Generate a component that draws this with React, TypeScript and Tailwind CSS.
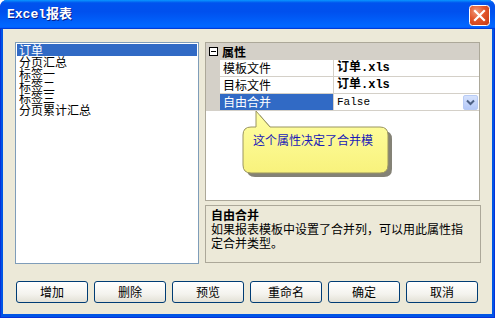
import React from "react";

const cjk = '"Noto Sans CJK SC", "Noto Sans", sans-serif';
const mono = '"Liberation Mono", "Noto Sans CJK SC", monospace';

function CloseButton() {
  return (
    <svg width="21" height="21" viewBox="0 0 21 21" className="block">
      <defs>
        <radialGradient id="cg" cx="0.35" cy="0.3" r="0.9">
          <stop offset="0" stopColor="#F19A7C" />
          <stop offset="0.45" stopColor="#E2562C" />
          <stop offset="1" stopColor="#C63A12" />
        </radialGradient>
      </defs>
      <rect x="0.5" y="0.5" width="20" height="20" rx="3" fill="url(#cg)" stroke="#FFFFFF" />
      <path d="M6 6 L15 15 M15 6 L6 15" stroke="#FFFFFF" strokeWidth="2.2" strokeLinecap="square" />
    </svg>
  );
}

function Balloon() {
  return (
    <div className="absolute left-[238px] top-[108px] w-[156px] h-[70px] pointer-events-none">
      <svg width="156" height="70" viewBox="0 0 156 70" className="absolute left-0 top-0">
        <defs>
          <linearGradient id="yg" x1="0" y1="0" x2="0" y2="1">
            <stop offset="0" stopColor="#FFFFA4" />
            <stop offset="1" stopColor="#F8F27C" />
          </linearGradient>
        </defs>
        <path
          d="M20 5 L20 21 L13 21 Q7 21 7 29 L7 59 Q7 67 15 67 L144 67 Q152 67 152 59 L152 29 Q152 21 144 21 L34 21 Z"
          fill="#6E6C5E"
          transform="translate(2,2)"
          opacity="0.85"
        />
        <path
          d="M18 3 L18 19 L13 19 Q5 19 5 27 L5 57 Q5 65 13 65 L142 65 Q150 65 150 57 L150 27 Q150 19 142 19 L32 19 Z"
          fill="url(#yg)"
          stroke="#9A9560"
          strokeWidth="1"
        />
      </svg>
      <div
        className="absolute left-[15px] top-[26px] text-[12px] leading-[12px] text-[#1A1AB8] whitespace-nowrap"
        style={{ fontFamily: cjk }}
      >
        这个属性决定了合并模
      </div>
    </div>
  );
}

function DropButton() {
  return (
    <div className="w-[15px] h-[15px] rounded-[2px] border border-[#B8CBF5] bg-[linear-gradient(180deg,#D6E2FD,#B5C9F8)] flex items-center justify-center">
      <svg width="9" height="7" viewBox="0 0 9 7">
        <path d="M1 1.5 L4.5 5 L8 1.5" stroke="#4D6185" strokeWidth="2" fill="none" />
      </svg>
    </div>
  );
}

const buttons = ["增加", "删除", "预览", "重命名", "确定", "取消"];
const items = ["订单", "分页汇总", "标签一", "标签二", "标签三", "分页累计汇总"];

export default function App() {
  return (
    <div className="relative w-[495px] h-[318px] overflow-hidden">
      <div className="w-[495px] h-[318px] flex flex-col rounded-t-[7px] bg-[#0055E5] border-x border-b border-[#0831D9]">
        <div className="h-[29px] shrink-0 -mx-px rounded-t-[7px] bg-[linear-gradient(180deg,#0997FF,#0053EE_10%,#0050EE_40%,#0066FF_88%,#0066FF_93%,#005BFF_95%,#003DD7_96%,#003DD7)] flex items-center pl-[7px] pr-[5px]">
          <div
            className="text-white font-bold text-[13px] leading-[14px] flex-1 pt-px [text-shadow:1px_1px_#0A1E8A]"
            style={{ fontFamily: mono }}
          >
            Excel报表
          </div>
          <div className="pt-px">
            <CloseButton />
          </div>
        </div>
        <div className="flex-1 mx-[2px] mb-[3px] bg-[#ECE9D8] flex flex-col pt-[13px] pl-[12px]" style={{ fontFamily: cjk }}>
          <div className="flex gap-[6px]">
            <div className="w-[184px] h-[222px] border border-[#7F9DB9] bg-white p-px flex flex-col">
              {items.map((it, i) => (
                <div
                  key={it}
                  className={
                    "h-[12px] leading-[12px] text-[12px] pl-[2px] whitespace-nowrap " +
                    (i === 0 ? "bg-[#316AC5] text-white" : "text-black")
                  }
                >
                  {it}
                </div>
              ))}
            </div>
            <div className="w-[275px] flex flex-col gap-[4px]">
              <div className="h-[159px] border border-[#ACA899] bg-white flex flex-col">
                <div className="h-[17px] bg-[#D4D0C8] flex items-center">
                  <div className="w-[14px] flex items-center justify-center">
                    <div className="w-[9px] h-[9px] border border-black bg-white flex items-center justify-center">
                      <div className="w-[5px] h-px bg-black" />
                    </div>
                  </div>
                  <div className="pl-[2px] text-[12px] leading-[12px] font-bold text-black">属性</div>
                </div>
                {[
                  ["模板文件", "订单.xls", false],
                  ["目标文件", "订单.xls", false],
                  ["自由合并", "False", true],
                ].map(([name, val, sel]) => (
                  <div key={name as string} className="h-[17px] flex">
                    <div className="w-[14px] bg-[#D4D0C8]" />
                    <div
                      className={
                        "w-[114px] border-r border-b border-[#D4D0C8] pl-[3px] flex items-center text-[12px] leading-[12px] " +
                        (sel ? "bg-[#316AC5] text-white" : "text-black")
                      }
                    >
                      {name as string}
                    </div>
                    <div className="flex-1 border-b border-[#D4D0C8] flex items-center pl-[3px] pr-px">
                      {sel ? (
                        <>
                          <div className="flex-1 text-[11px] leading-[12px] text-black" style={{ fontFamily: mono }}>
                            {val as string}
                          </div>
                          <DropButton />
                        </>
                      ) : (
                        <div className="text-[12px] leading-[12px] font-bold text-black" style={{ fontFamily: mono }}>
                          {val as string}
                        </div>
                      )}
                    </div>
                  </div>
                ))}
              </div>
              <div className="h-[58px] w-[276px] border border-[#ACA899] pl-[5px] pt-[2px] text-[12px] leading-[14px] text-black">
                <div className="font-bold leading-[13px]">自由合并</div>
                <div className="mt-[1px]">如果报表模板中设置了合并列，可以用此属性指</div>
                <div>定合并类型。</div>
              </div>
            </div>
          </div>
          <div className="flex gap-[6px] mt-[17px] ml-px">
            {buttons.map((b) => (
              <div
                key={b}
                className="w-[72px] h-[22px] rounded-[3px] border border-[#003C74] bg-[linear-gradient(180deg,#FFFFFF,#F4F3EE_60%,#E3E1D6)] flex items-center justify-center text-[12px] leading-[12px] text-black"
              >
                {b}
              </div>
            ))}
          </div>
        </div>
      </div>
      <Balloon />
    </div>
  );
}
